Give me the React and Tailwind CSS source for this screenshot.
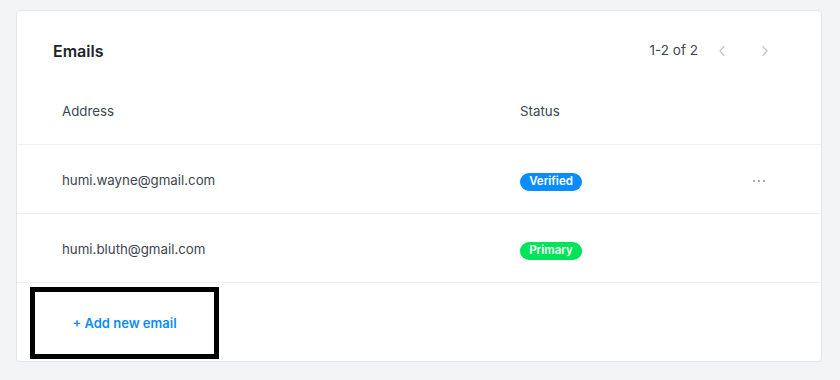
const emails = [
  { address: 'humi.wayne@gmail.com', status: 'Verified', menu: true },
  { address: 'humi.bluth@gmail.com', status: 'Primary', menu: false },
];

const badgeClass = (status) => {
  switch (status) {
    case 'Verified': return 'bg-[#0a8cff]';
    case 'Primary': return 'bg-[#00e35a]';
    default: return 'bg-gray-400';
  }
};

const Chevron = ({ dir }) => (
  <svg width="8" height="12" viewBox="0 0 8 12" fill="none">
    <path
      d={dir === 'left' ? 'M6 1.5 L2 6 L6 10.5' : 'M2 1.5 L6 6 L2 10.5'}
      stroke="#c3c7cd"
      strokeWidth="1.2"
      strokeLinecap="round"
      strokeLinejoin="round"
    />
  </svg>
);

export default function App() {
  return (
    <div className="min-h-[380px] w-[840px] bg-[#f3f4f6] pt-[10px] pl-4 font-['Inter',sans-serif]">
      <div className="w-[806px] h-[352px] bg-white border border-[#e3e6ea] rounded-[4px] overflow-hidden">
        {/* Header */}
        <div className="flex items-center justify-between h-[65px] pl-[36px] pr-[50px] pt-[14px]">
          <h2 className="text-[16px] font-semibold text-[#1d232c]">Emails</h2>
          <div className="flex items-center">
            <span className="text-[13.5px] text-[#3d4550] mr-[18px]">1-2 of 2</span>
            <button className="w-[12px] flex justify-center mr-[31px]"><Chevron dir="left" /></button>
            <button className="w-[12px] flex justify-center"><Chevron dir="right" /></button>
          </div>
        </div>

        {/* Column heads */}
        <div className="flex items-center h-[69px] pt-[3px] border-b border-[#eef0f2] text-[13.3px] text-[#3d4550]">
          <div className="w-[503px] pl-[45px]">Address</div>
          <div>Status</div>
        </div>

        {emails.map((e) => (
          <div key={e.address} className="flex items-center h-[69px] border-b border-[#eef0f2]">
            <div className="w-[503px] pl-[45px] pt-[3px] text-[13.3px] text-[#3d4550]">{e.address}</div>
            <div className="w-[233px]">
              <span className={`inline-flex items-center justify-center w-[62px] h-[18px] rounded-full text-[11.5px] font-semibold text-white ${badgeClass(e.status)}`}>
                {e.status}
              </span>
            </div>
            {e.menu && (
              <div className="flex gap-[3px] mt-[4px]">
                <span className="w-[2px] h-[2px] rounded-full bg-[#8b929b]" />
                <span className="w-[2px] h-[2px] rounded-full bg-[#8b929b]" />
                <span className="w-[2px] h-[2px] rounded-full bg-[#8b929b]" />
              </div>
            )}
          </div>
        ))}

        {/* Add row */}
        <div className="pl-[13px] pt-[4px]">
          <button className="w-[189px] h-[72px] pt-[2px] border-[5px] border-black flex items-center justify-center text-[13px] font-semibold text-[#0a8cff]">
            + Add new email
          </button>
        </div>
      </div>
    </div>
  );
}
